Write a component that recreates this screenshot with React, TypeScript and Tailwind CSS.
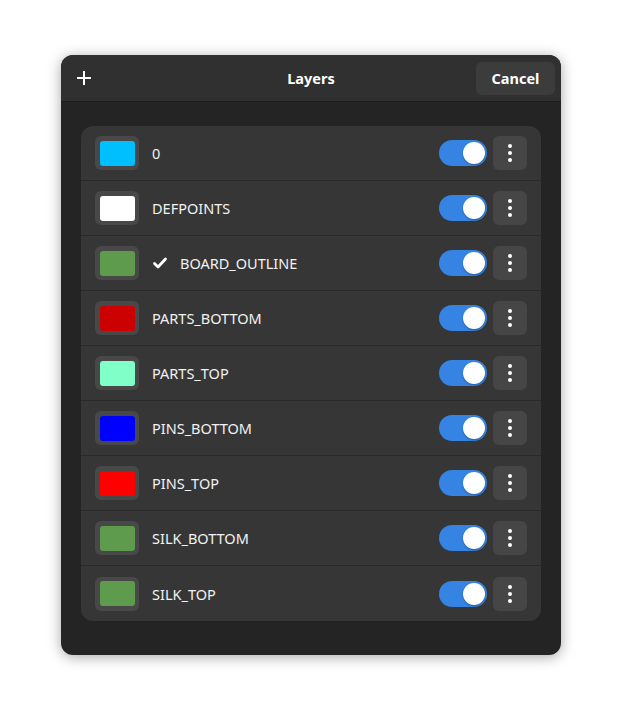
import React from "react";

type Layer = { name: string; color: string; current?: boolean };

const layers: Layer[] = [
  { name: "0", color: "#00bfff" },
  { name: "DEFPOINTS", color: "#ffffff" },
  { name: "BOARD_OUTLINE", color: "#5f9b4d", current: true },
  { name: "PARTS_BOTTOM", color: "#cc0000" },
  { name: "PARTS_TOP", color: "#80ffc8" },
  { name: "PINS_BOTTOM", color: "#0000ff" },
  { name: "PINS_TOP", color: "#ff0000" },
  { name: "SILK_BOTTOM", color: "#5f9b4d" },
  { name: "SILK_TOP", color: "#5f9b4d" },
];

function Switch() {
  return (
    <div className="flex h-[26px] w-[48px] items-center justify-end rounded-full bg-[#3584e4] pr-[2px]">
      <div className="h-[22px] w-[22px] rounded-full bg-white shadow-[0_1px_2px_rgba(0,0,0,0.3)]" />
    </div>
  );
}

function MenuButton() {
  return (
    <button className="flex h-[34px] w-[34px] flex-col items-center justify-center gap-[3px] rounded-[6px] bg-[#464646]">
      <span className="h-[4px] w-[4px] rounded-full bg-white" />
      <span className="h-[4px] w-[4px] rounded-full bg-white" />
      <span className="h-[4px] w-[4px] rounded-full bg-white" />
    </button>
  );
}

function Row({ layer, last }: { layer: Layer; last: boolean }) {
  return (
    <div
      className={
        "flex h-[55px] items-center pl-[14px] pr-[14px] " +
        (last ? "" : "border-b border-[#2a2a2a]")
      }
    >
      <div className="flex h-[34px] w-[44px] items-center justify-center rounded-[6px] bg-[#484848]">
        <div className="h-[25px] w-[35px] rounded-[3px]" style={{ backgroundColor: layer.color }} />
      </div>
      <div className="ml-[13px] flex flex-1 items-center text-[14.5px] text-[#f2f2f2]">
        {layer.current && (
          <svg width="16" height="16" viewBox="0 0 16 16" className="mr-[12px]">
            <path d="M2.5 8.5 L6 12 L13.5 4" fill="none" stroke="white" strokeWidth="2.8" strokeLinecap="round" strokeLinejoin="round" />
          </svg>
        )}
        <span className="pt-[2px]">{layer.name}</span>
      </div>
      <div className="flex items-center gap-[6px]">
        <Switch />
        <MenuButton />
      </div>
    </div>
  );
}

export default function App() {
  return (
    <div className="min-h-[722px] bg-white pt-[55px]" style={{ fontFamily: '"Noto Sans", "Open Sans", sans-serif' }}>
      <div className="mx-auto w-[500px] h-[600px] overflow-hidden rounded-[12px] bg-[#242424] shadow-[0_2px_14px_rgba(0,0,0,0.35)] flex flex-col">
        <div className="relative flex h-[47px] shrink-0 items-center border-b border-[#1c1c1c] bg-[#303030] px-[6px]">
          <div className="flex h-[33px] w-[33px] items-center justify-center">
            <svg width="16" height="16" viewBox="0 0 16 16">
              <path d="M8 1 V15 M1 8 H15" stroke="white" strokeWidth="2" />
            </svg>
          </div>
          <div className="absolute left-1/2 -translate-x-1/2 pt-[2px] text-[14.5px] font-bold text-white">Layers</div>
          <button className="ml-auto h-[33px] w-[79px] rounded-[6px] bg-[#3c3c3c] pt-[2px] text-[14.5px] font-bold text-white">
            Cancel
          </button>
        </div>
        <div className="px-[20px] pt-[24px]">
          <div className="overflow-hidden rounded-[12px] bg-[#363636]">
            {layers.map((l, i) => (
              <Row key={l.name} layer={l} last={i === layers.length - 1} />
            ))}
          </div>
        </div>
      </div>
    </div>
  );
}
